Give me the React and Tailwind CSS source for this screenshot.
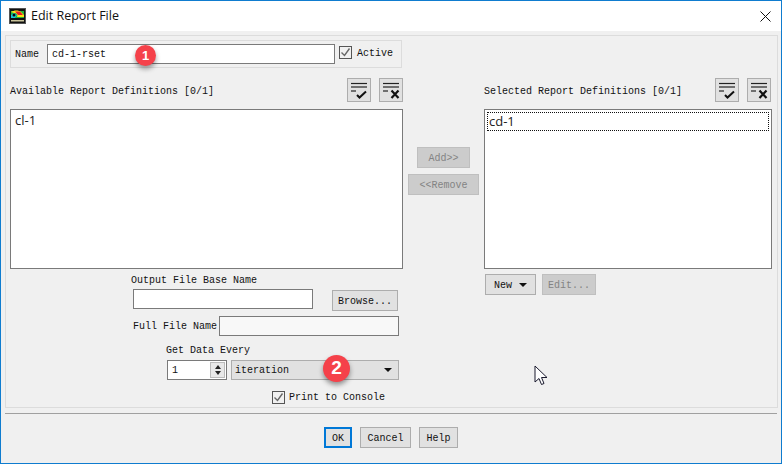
const mono = "font-['Liberation_Mono',monospace] text-[10px] leading-[12px] text-[#111]"

function Btn({ children, className = '', disabled = false }) {
  return (
    <div
      className={`flex items-center justify-center border pt-[2px] ${
        disabled ? 'bg-[#cccccc] border-[#bfbfbf] text-[#838383]' : 'bg-[#e1e1e1] border-[#adadad] text-[#111]'
      } font-['Liberation_Mono',monospace] text-[10px] leading-[12px] ${className}`}
    >
      {children}
    </div>
  )
}

function ToolIcon({ cross = false }) {
  return (
    <div className="w-[24px] h-[24px] bg-[#e1e1e1] border border-[#adadad] flex items-center justify-center">
      <svg width="18" height="18" viewBox="0 0 18 18" fill="none">
        <path d="M1 2.5h16" stroke="#222" strokeWidth="1.2" />
        <path d="M1 6h16" stroke="#222" strokeWidth="1.2" />
        <path d="M1 10h5" stroke="#222" strokeWidth="1.2" />
        {cross ? (
          <path d="M9.5 9.5l7 7.5M16.5 9.5l-7 7.5" stroke="#111" strokeWidth="2.2" />
        ) : (
          <path d="M7 14l2.5 2.5L16 10.5" stroke="#111" strokeWidth="2" />
        )}
      </svg>
    </div>
  )
}

function Check({ className = '' }) {
  return (
    <div className={`w-[13px] h-[13px] border border-[#555] bg-[#f0f0f0] flex items-center justify-center ${className}`}>
      <svg width="11" height="11" viewBox="0 0 11 11" fill="none">
        <path d="M1.5 5.5l3 3 5-7" stroke="#666" strokeWidth="1.4" />
      </svg>
    </div>
  )
}

function Badge({ n, className = '' }) {
  return (
    <div
      className={`absolute rounded-full bg-[#f5414a] text-white flex items-center justify-center font-['Liberation_Sans',sans-serif] font-bold shadow-[0_3px_5px_rgba(0,0,0,0.4)] ${className}`}
    >
      {n}
    </div>
  )
}

function ListHeader({ label, className = '' }) {
  return (
    <div className={`flex items-center justify-between h-[24px] ${className}`}>
      <span className={`${mono} pt-[3px]`}>{label}</span>
      <div className="flex gap-[8px]">
        <ToolIcon />
        <ToolIcon cross />
      </div>
    </div>
  )
}

export default function App() {
  return (
    <div className="w-[782px] h-[464px] border border-[#0f7ccf] bg-[#f0f0f0] flex flex-col overflow-hidden relative">
      {/* Title bar */}
      <div className="h-[30px] bg-white flex items-center shrink-0 pl-[8px] pr-[10px]">
        <svg width="17" height="16" viewBox="0 0 17 16" className="shrink-0">
          <rect width="17" height="16" fill="#555" />
          <rect x="1" y="1" width="15" height="14" fill="#111" />
          <rect x="2" y="3" width="13" height="7" fill="#1fb53a" />
          <path d="M2 4c3-2 8-2 10 0l3 3v2H8c1-2 0-4-3-4z" fill="#ffe21a" />
          <path d="M6 3.5h5l3 3.5H9z" fill="#ec1c24" />
          <path d="M2 7l3-2 3 2-2 3H2z" fill="#19c8d8" />
          <circle cx="5" cy="7" r="1.5" fill="#0a0a0a" />
          <rect x="2" y="12" width="13" height="1.5" fill="#c9c39a" />
        </svg>
        <span className="ml-[5px] font-['Open_Sans',sans-serif] text-[12.5px] text-[#111]">Edit Report File</span>
        <svg width="11" height="11" viewBox="0 0 11 11" className="ml-auto">
          <path d="M0.5 0.5l10 10M10.5 0.5l-10 10" stroke="#111" strokeWidth="1" />
        </svg>
      </div>

      {/* Main panel */}
      <div className="ml-[4px] mt-[4px] w-[773px] h-[373px] border border-[#dcdcdc] shrink-0 flex pl-[4px] pt-[4px]">
        {/* Left column */}
        <div className="w-[393px] shrink-0">
          <div className="relative w-[392px] h-[28px] border border-[#dcdcdc] flex items-center pl-[4px]">
            <span className={`${mono} w-[32px] pt-[2px]`}>Name</span>
            <div className="w-[288px] h-[20px] border border-[#7a7a7a] bg-white flex items-center pl-[4px]">
              <span className={`${mono} pt-[2px]`}>cd-1-rset</span>
            </div>
            <Check className="ml-[4px] -mt-[3px]" />
            <span className={`${mono} ml-[5px] -mt-[1px]`}>Active</span>
            <Badge n="1" className="left-[124px] top-[4px] w-[21px] h-[21px] text-[13px]" />
          </div>

          <div className="mt-[10px]">
            <ListHeader label="Available Report Definitions [0/1]" />
          </div>

          <div className="mt-[7px] h-[160px] border border-[#7a7a7a] bg-white pl-[4px] pt-[2px]">
            <div className="font-['Open_Sans',sans-serif] text-[13px] leading-[16px] text-[#222]">cl-1</div>
          </div>

          {/* Output form */}
          <div className={`${mono} ml-[121px] mt-[6px] h-[12px]`}>Output File Base Name</div>
          <div className="flex ml-[123px] mt-[2px]">
            <div className="w-[180px] h-[20px] border border-[#7a7a7a] bg-white" />
            <Btn className="ml-[19px] mt-[1px] w-[66px] h-[21px]">Browse...</Btn>
          </div>
          <div className="flex items-center ml-[123px] mt-[5px]">
            <span className={`${mono} w-[86px] pt-[2px]`}>Full File Name</span>
            <div className="w-[180px] h-[20px] border border-[#7a7a7a] bg-[#f8f8f8]" />
          </div>
          <div className={`${mono} ml-[156px] mt-[9px] h-[12px]`}>Get Data Every</div>
          <div className="relative flex ml-[157px] mt-[3px]">
            <div className="w-[60px] h-[20px] border border-[#7a7a7a] bg-white flex items-center pl-[4px] pr-[1px]">
              <span className={`${mono} pt-[2px]`}>1</span>
              <div className="ml-auto w-[15px] h-[16px] bg-[#e8e8e8] border border-[#bbb] flex flex-col items-center justify-center gap-[2px]">
                <div className="w-0 h-0 border-x-[3px] border-x-transparent border-b-[4px] border-b-[#222]" />
                <div className="w-0 h-0 border-x-[3px] border-x-transparent border-t-[4px] border-t-[#222]" />
              </div>
            </div>
            <Btn className="ml-[4px] w-[168px] h-[20px] !justify-start pl-[3px] pr-[6px]">
              iteration
              <div className="ml-auto -mt-[2px] w-0 h-0 border-x-[4px] border-x-transparent border-t-[4px] border-t-[#111]" />
            </Btn>
            <Badge n="2" className="left-[156px] -top-[5px] w-[27px] h-[27px] text-[19px]" />
          </div>
          <div className="flex items-center ml-[262px] mt-[10px]">
            <Check />
            <span className={`${mono} ml-[4px] pt-[2px]`}>Print to Console</span>
          </div>
        </div>

        {/* Add / remove */}
        <div className="w-[81px] shrink-0 flex flex-col items-center pt-[107px]">
          <Btn disabled className="w-[53px] h-[21px]">Add&gt;&gt;</Btn>
          <Btn disabled className="w-[71px] h-[21px] mt-[6px]">&lt;&lt;Remove</Btn>
        </div>

        {/* Right column */}
        <div className="w-[288px] shrink-0 pt-[38px]">
          <ListHeader label="Selected Report Definitions [0/1]" className="pr-[1px]" />
          <div className="mt-[7px] h-[160px] border border-[#7a7a7a] bg-white p-[2px]">
            <div className="h-[19px] border border-dotted border-[#111] pl-[1px] pb-[2px] flex items-center">
              <span className="font-['Open_Sans',sans-serif] text-[13px] leading-[16px] text-[#222]">cd-1</span>
            </div>
          </div>
          <div className="flex mt-[5px] ml-[1px] gap-[6px]">
            <Btn className="w-[51px] h-[21px] gap-[7px]">
              New
              <div className="-mt-[2px] w-0 h-0 border-x-[4px] border-x-transparent border-t-[4px] border-t-[#111]" />
            </Btn>
            <Btn disabled className="w-[54px] h-[21px]">Edit...</Btn>
          </div>
        </div>
      </div>

      {/* Separator and footer */}
      <div className="mt-[5px] mx-[4px] h-px bg-[#a0a0a0] shrink-0" />
      <div className="flex justify-center mt-[13px] gap-[8px]">
        <Btn className="w-[28px] h-[21px] !border-2 !border-[#0078d7]">OK</Btn>
        <Btn className="w-[51px] h-[21px]">Cancel</Btn>
        <Btn className="w-[39px] h-[21px]">Help</Btn>
      </div>

      {/* Mouse cursor */}
      <svg width="14" height="22" viewBox="0 0 14 22" className="absolute left-[533px] top-[364px]">
        <path d="M1 1v16l4-3.5 2.5 6 2.5-1-2.5-6H13z" fill="#fff" stroke="#1a1a2e" strokeWidth="1" />
      </svg>
    </div>
  )
}
